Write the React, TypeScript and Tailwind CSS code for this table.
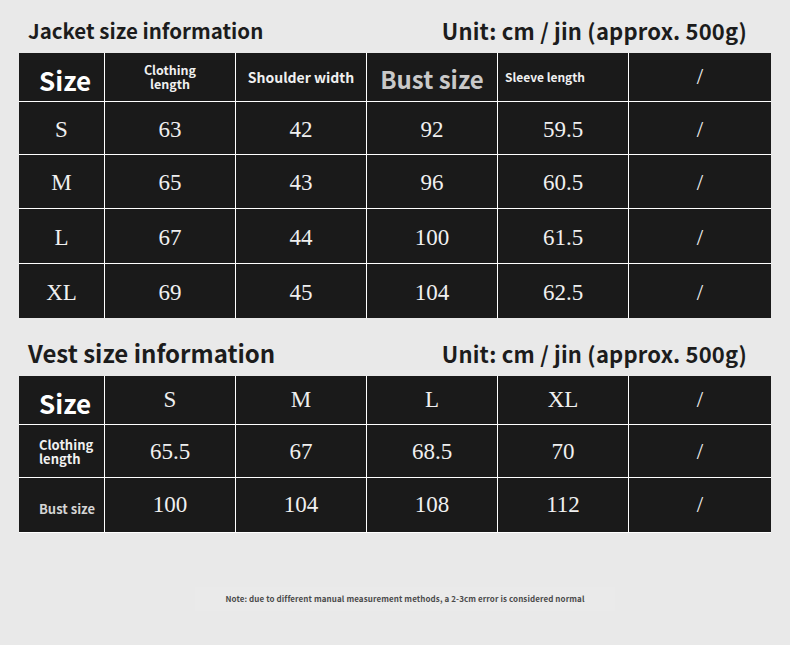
const jacketRows = [
  ["S", "63", "42", "92", "59.5", "/"],
  ["M", "65", "43", "96", "60.5", "/"],
  ["L", "67", "44", "100", "61.5", "/"],
  ["XL", "69", "45", "104", "62.5", "/"],
];

const vestRows = [
  ["65.5", "67", "68.5", "70", "/"],
  ["100", "104", "108", "112", "/"],
];

const sans = "font-['Noto_Sans_CJK_SC','Noto_Sans',sans-serif]";
const serif = "font-['Liberation_Serif',serif]";

const Cell = ({
  children,
  right = true,
  bottom = true,
  className = "",
}: {
  children: React.ReactNode;
  right?: boolean;
  bottom?: boolean;
  className?: string;
}) => (
  <div
    className={`flex items-center border-white ${right ? "border-r-[1.5px]" : ""} ${bottom ? "border-b-[1.5px]" : ""} ${className}`}
  >
    {children}
  </div>
);

const Title = ({ text, size }: { text: string; size: string }) => (
  <div className={`flex justify-between items-center pl-[9px] pr-[24px] h-[28px] font-bold text-[#1c1c1c] ${sans}`}>
    <span className={size}>{text}</span>
    <span className="text-[22px] tracking-[0.2px]">Unit: cm / jin (approx. 500g)</span>
  </div>
);

const App = () => {
  return (
    <div className="w-[790px] h-[645px] bg-[#e9e9e9] px-[19px] pt-[16px] flex flex-col">
      <Title text="Jacket size information" size="text-[20.5px]" />

      <div className="mt-[9px] bg-[#1a1a1a] grid grid-cols-[86px_131px_131px_131px_131px_142px] grid-rows-[49px_53px_54px_55px_54px] text-[#f0f0f0]">
        <Cell className={`pl-[20px] pt-[4px] text-[26px] font-bold text-white ${sans}`}>Size</Cell>
        <Cell className={`justify-center text-center text-[12.5px] leading-[14px] font-bold ${sans}`}>
          Clothing
          <br />
          length
        </Cell>
        <Cell className={`justify-center text-[14px] font-bold ${sans}`}>Shoulder width</Cell>
        <Cell className={`justify-center pt-[4px] text-[24px] font-bold text-[#c9c9c9] ${sans}`}>Bust size</Cell>
        <Cell className={`pl-[7px] text-[12px] font-bold ${sans}`}>Sleeve length</Cell>
        <Cell right={false} className={`justify-center text-[23px] ${serif}`}>/</Cell>

        {jacketRows.map((row, r) =>
          row.map((v, c) => (
            <Cell
              key={`${r}-${c}`}
              right={c < row.length - 1}
              bottom={r < jacketRows.length - 1}
              className={`justify-center pt-[4px] text-[23px] ${serif}`}
            >
              {v}
            </Cell>
          ))
        )}
      </div>

      <div className="mt-[21px]">
        <Title text="Vest size information" size="text-[24px]" />
      </div>

      <div className="mt-[9px] bg-[#1a1a1a] grid grid-cols-[86px_131px_131px_131px_131px_142px] grid-rows-[49px_53px_54px] text-[#f0f0f0] border-b border-white">
        <Cell className={`pl-[20px] pt-[4px] text-[26px] font-bold text-white ${sans}`}>Size</Cell>
        {["S", "M", "L", "XL", "/"].map((v, c) => (
          <Cell key={v} right={c < 4} className={`justify-center text-[23px] ${serif}`}>
            {v}
          </Cell>
        ))}

        <Cell className={`pl-[20px] pt-[2px] text-[13px] leading-[14px] font-bold ${sans}`}>
          Clothing
          <br />
          length
        </Cell>
        {vestRows[0].map((v, c) => (
          <Cell key={`a${c}`} right={c < 4} className={`justify-center pt-[3px] text-[23px] ${serif}`}>
            {v}
          </Cell>
        ))}

        <Cell bottom={false} className={`pl-[20px] pt-[8px] text-[13px] font-bold text-[#d4d4d4] ${sans}`}>
          Bust size
        </Cell>
        {vestRows[1].map((v, c) => (
          <Cell key={`b${c}`} right={c < 4} bottom={false} className={`justify-center text-[23px] ${serif}`}>
            {v}
          </Cell>
        ))}
      </div>

      <div className="mt-[54px] ml-[176px] w-[420px] h-[24px] bg-[#eaeaea] flex items-center justify-center">
        <span className={`text-[8px] font-bold tracking-[0.1px] text-[#4a4a4a] ${sans}`}>
          Note: due to different manual measurement methods, a 2-3cm error is considered normal
        </span>
      </div>
    </div>
  );
};

export default App;
